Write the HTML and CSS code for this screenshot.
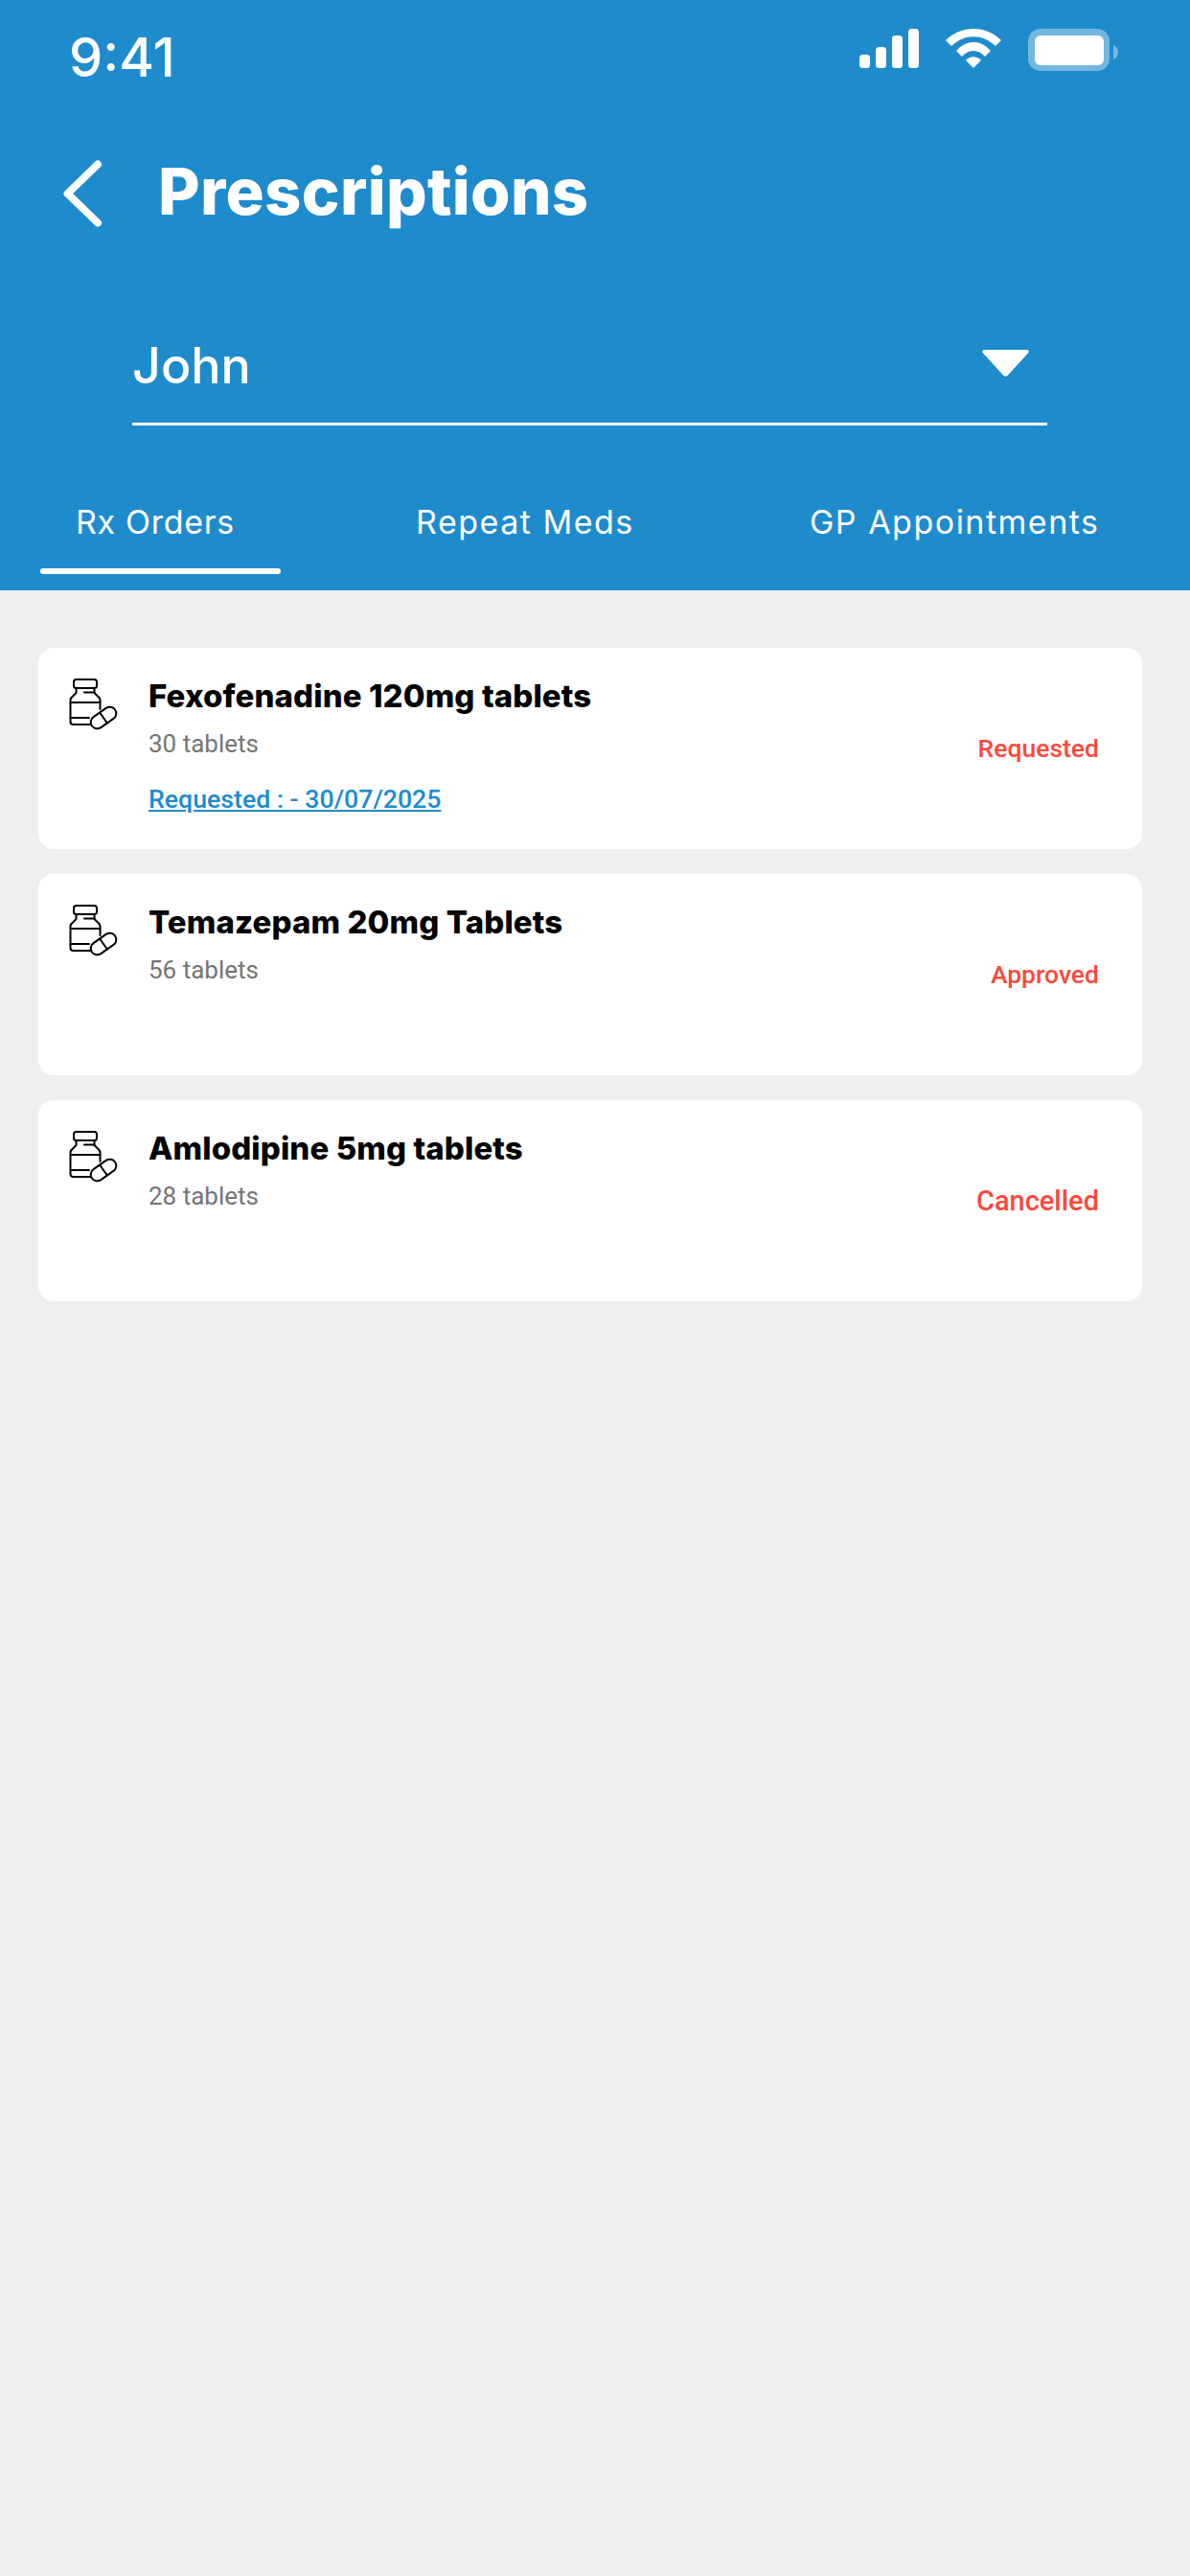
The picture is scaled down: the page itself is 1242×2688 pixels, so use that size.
FILE: index.html
```html
<!DOCTYPE html>
<html lang="en">
<head>
    <meta charset="UTF-8">
    <meta name="viewport" content="width=device-width, initial-scale=1.0">
    <title>Prescriptions</title>
    <link rel="stylesheet" href="styles.css">
</head>
<body>
    <header class="top">
        <div class="statusbar">
            <span class="time">9:41</span>
            <div class="status-icons">
                <svg width="62" height="41" viewBox="0 0 62 41"><g fill="#fff"><rect x="0" y="27" width="11" height="14" rx="3.5"/><rect x="17" y="19" width="11" height="22" rx="3.5"/><rect x="34" y="7" width="11" height="34" rx="3.5"/><rect x="51" y="0" width="11" height="41" rx="3.5"/></g></svg>
                <svg width="58" height="41" viewBox="0 0 58 41"><g fill="#fff"><path d="M0 12C16 -4 42 -4 58 12L52 18C38 5 20 5 6 18Z"/><path d="M11 23C22 11 36 11 47 23L41 29C34 21 24 21 17 29Z"/><path d="M21 33C26 28 32 28 37 33L29 41Z"/></g></svg>
                <svg width="94" height="44" viewBox="0 0 94 44"><rect x="0" y="0" width="85" height="44" rx="13" fill="#fff" opacity=".38"/><rect x="7" y="7" width="72" height="31" rx="6" fill="#fff"/><path d="M89 17C92 18 94 21 94 24.500C94 28 92 31 89 32Z" fill="#fff" opacity=".38"/></svg>
            </div>
        </div>
        <div class="titlebar">
            <svg class="back" width="42" height="70" viewBox="0 0 42 70"><path d="M37 4.500L5.500 35L37 65.500" fill="none" stroke="#fff" stroke-width="8" stroke-linecap="round" stroke-linejoin="round"/></svg>
            <h1>Prescriptions</h1>
        </div>
        <div class="picker">
            <span>John</span>
            <svg width="51" height="30" viewBox="0 0 50 30"><path d="M3 1H47C49 1 50 3 48.500 4.500L27 28C26 29 24 29 23 28L1.500 4.500C0 3 1 1 3 1Z" fill="#fff"/></svg>
        </div>
        <nav class="tabs">
            <a class="tab active">Rx Orders</a>
            <a class="tab">Repeat Meds</a>
            <a class="tab">GP Appointments</a>
        </nav>
    </header>

    <main class="list">
        <div class="card">
            <svg class="pill" width="52" height="54" viewBox="0 0 52 54"><use href="#bottle"/></svg>
            <div class="info">
                <h3>Fexofenadine 120mg tablets</h3>
                <p class="qty">30 tablets</p>
                <a class="req">Requested : - 30/07/2025</a>
            </div>
            <span class="state">Requested</span>
        </div>
        <div class="card">
            <svg class="pill" width="52" height="54" viewBox="0 0 52 54"><use href="#bottle"/></svg>
            <div class="info">
                <h3>Temazepam 20mg Tablets</h3>
                <p class="qty">56 tablets</p>
            </div>
            <span class="state">Approved</span>
        </div>
        <div class="card">
            <svg class="pill" width="52" height="54" viewBox="0 0 52 54"><use href="#bottle"/></svg>
            <div class="info">
                <h3>Amlodipine 5mg tablets</h3>
                <p class="qty">28 tablets</p>
            </div>
            <span class="state state-cancelled">Cancelled</span>
        </div>
    </main>

    <svg class="defs" width="0" height="0">
        <symbol id="bottle" viewBox="0 0 52 54">
            <g fill="none" stroke="#000" stroke-width="2" stroke-linecap="round" stroke-linejoin="round">
                <rect x="5" y="1" width="24" height="9" rx="2.500"/>
                <path d="M7.500 10V15L2.500 20C1.800 20.800 1.500 21.500 1.500 22.500V45C1.500 47 2.800 48 4.500 48H23"/>
                <path d="M26.500 10V15L31.500 20C32.200 20.800 32.500 21.500 32.500 22.500V32"/>
                <path d="M1.500 25H32.500M1.500 41H21M16 14.500H26.500"/>
                <rect x="21.250" y="34.250" width="29.500" height="13.500" rx="6.750" transform="rotate(-35 36 41)"/>
                <path d="M32.100 35.500L39.900 46.500"/>
            </g>
        </symbol>
    </svg>
</body>
</html>
```

FILE: styles.css
```css
* { box-sizing: border-box; }
html, body { margin: 0; padding: 0; }
body { width: 1242px; height: 2688px; background: #efefef; font-family: Roboto, sans-serif; overflow: hidden; }

.top { background: #1e8bcd; height: 616px; color: #fff; font-family: Inter, sans-serif; }

.statusbar { display: flex; justify-content: space-between; align-items: flex-start; padding: 30px 75px 0 72px; height: 167px; }
.time { font-size: 56px; line-height: 60px; font-weight: 500; }
.status-icons { display: flex; gap: 28px; align-items: flex-start; }

.titlebar { display: flex; align-items: center; padding-left: 65px; height: 70px; }
.back { flex: none; }
.titlebar h1 { margin: -4px 0 0 58px; font-size: 67px; line-height: 70px; font-weight: 800; letter-spacing: 0.3px; }

.picker { display: flex; justify-content: space-between; align-items: center; width: 955px; height: 100px; margin: 107px 0 0 138px; padding: 0 18px 22px 0; border-bottom: 3px solid #fff; font-size: 52px; font-weight: 500; }
.picker svg { margin-bottom: 6px; }

.tabs { display: grid; grid-template-columns: 392px 411px auto; justify-items: start; margin-top: 79px; padding-left: 42px; }
.tab { position: relative; font-size: 34px; line-height: 44px; letter-spacing: 1.5px; }
.tab.active { padding: 0 48px 0 37px; letter-spacing: 0.7px; }
.tab.active::after { content: ""; position: absolute; left: 0; right: 0; bottom: -32px; height: 6px; border-radius: 3px; background: #fff; }

.list { display: flex; flex-direction: column; gap: 26px; padding: 60px 50px 0 40px; }
.card { display: flex; align-items: flex-start; height: 210px; padding: 29px 45px 0 32px; background: #fff; border-radius: 16px; }
.pill { flex: none; margin-top: 3px; }
.info { flex: 1; margin-left: 31px; }
.info h3 { margin: 0; font-family: Inter, sans-serif; font-size: 33px; line-height: 42px; font-weight: 800; color: #000; letter-spacing: 0.1px; }
.qty { margin: 12px 0 0; font-size: 26px; line-height: 34px; color: #757575; }
.req { display: block; margin-top: 24px; font-size: 26.7px; line-height: 34px; font-weight: 500; color: #1e8bcd; text-decoration: underline; }
.state { margin-top: 59px; font-size: 26.5px; line-height: 34px; font-weight: 500; color: #f94a3d; }
.state-cancelled { font-size: 29px; }
.defs { position: absolute; }
```
